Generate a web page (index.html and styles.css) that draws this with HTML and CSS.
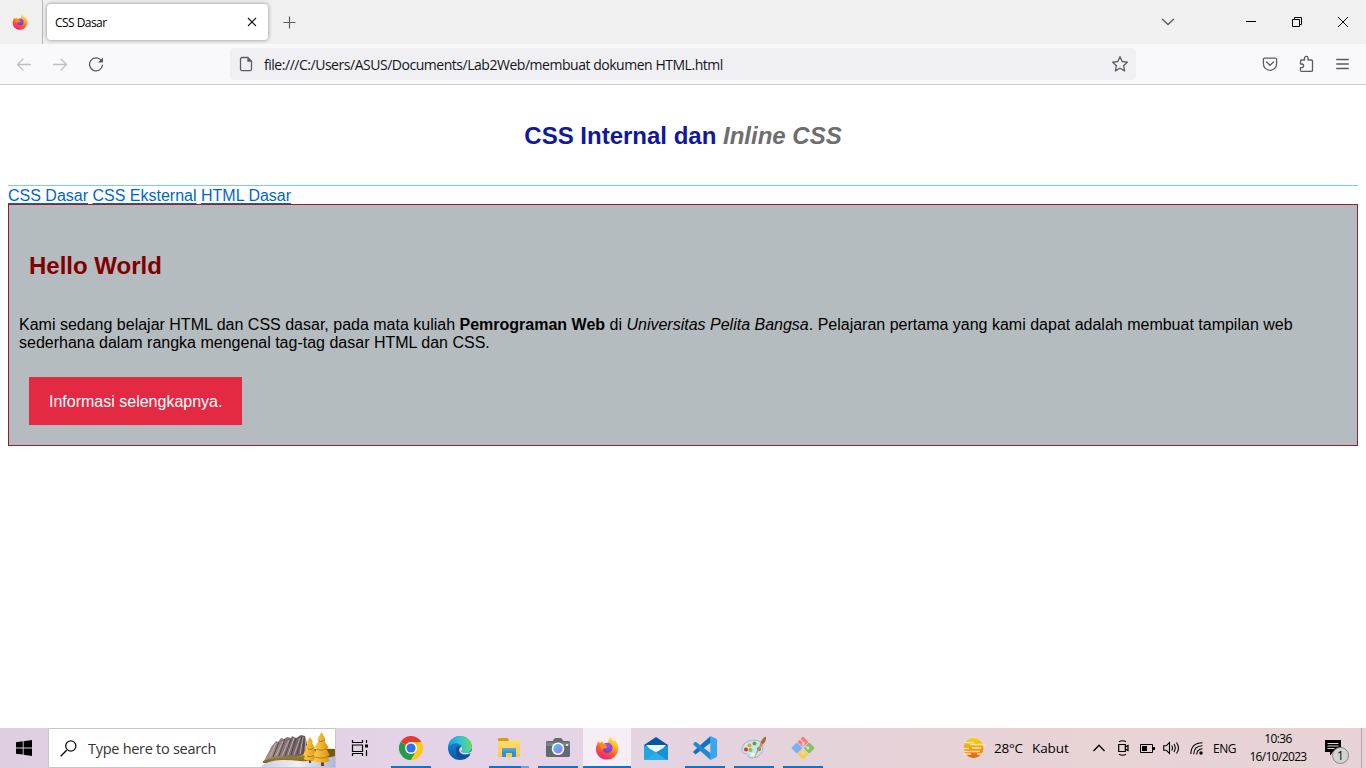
FILE: index.html
```html
<!DOCTYPE html>
<html lang="id">
<head>
<meta charset="utf-8">
<title>CSS Dasar</title>
<link rel="stylesheet" href="styles.css">
</head>
<body>
<svg class="defs" width="0" height="0" aria-hidden="true">
  <defs>
    <linearGradient id="ffBody" x1=".8" y1="0" x2=".3" y2="1"><stop offset="0" stop-color="#fff14a"/><stop offset=".35" stop-color="#ffb022"/><stop offset=".65" stop-color="#ff5a32"/><stop offset="1" stop-color="#f3187c"/></linearGradient>
    <radialGradient id="ffCore" cx=".6" cy=".3" r=".8"><stop offset="0" stop-color="#b04ae8"/><stop offset="1" stop-color="#5742c4"/></radialGradient>
    <linearGradient id="edgeTop" x1="0" y1=".4" x2="1" y2=".3"><stop offset="0" stop-color="#1d9be0"/><stop offset=".5" stop-color="#31c3d4"/><stop offset="1" stop-color="#6edb58"/></linearGradient>
    <linearGradient id="edgeLow" x1="0" y1="0" x2="0" y2="1"><stop offset="0" stop-color="#1a92dd"/><stop offset="1" stop-color="#0757ac"/></linearGradient>
    <linearGradient id="lens" x1="0" y1="0" x2="1" y2="1"><stop offset="0" stop-color="#42d3ef"/><stop offset=".5" stop-color="#759bf5"/><stop offset="1" stop-color="#cf5ce6"/></linearGradient>
    <linearGradient id="folder" x1="0" y1="0" x2="0" y2="1"><stop offset="0" stop-color="#ffdf79"/><stop offset="1" stop-color="#fbc941"/></linearGradient>
    <linearGradient id="sun" x1="0" y1="0" x2="0" y2="1"><stop offset="0" stop-color="#ffd000"/><stop offset=".5" stop-color="#f9a20c"/><stop offset="1" stop-color="#e8590c"/></linearGradient>
    <linearGradient id="rock" x1="0" y1="0" x2="1" y2="0"><stop offset="0" stop-color="#aa9490"/><stop offset="1" stop-color="#5b5158"/></linearGradient>
    <linearGradient id="snow" x1="0" y1="0" x2="1" y2="0"><stop offset="0" stop-color="#c8cbe6"/><stop offset=".5" stop-color="#f2f0f6"/><stop offset="1" stop-color="#aeb5d8"/></linearGradient>
    <linearGradient id="hill" x1="0" y1="0" x2="0" y2="1"><stop offset="0" stop-color="#c8ac32"/><stop offset="1" stop-color="#796018"/></linearGradient>
    <linearGradient id="tree" x1="0" y1="0" x2="1" y2="0"><stop offset="0" stop-color="#ffd04e"/><stop offset="1" stop-color="#d9950f"/></linearGradient>
    <symbol id="firefox" viewBox="0 0 24 24">
      <path d="M2.200 8.200 3 5.100l2 2.200c.7-1 1.500-1.600 2.500-2l.4 2.200 4.500.6 1.500-4.600L15.300.5c.6 2 2.300 3 3.100 5l1.700-1.400c2 3 3.500 6 3.200 9.200A11.300 11.300 0 0 1 12 23.600C5.600 23.600.9 18.700.9 13c0-1.800.5-3.400 1.300-4.800z" fill="url(#ffBody)"/>
      <path d="M8.200 9.200C9.700 6.400 13 6 15.300 7.600c2.200 1.600 2.800 4.600 1.500 7-1.500 2.600-5.500 3.200-7.800 1.200-1.300-1.200-1.600-2.400-1.400-3.400l3.400.2 1.500-1.800-4.300-1.600z" fill="url(#ffCore)"/>
      <path d="M6 7.600 12.200 8l-1.800 1.700 1.700 1.100-2 1.300-2.500.3 1.200 2C6 13.500 4.900 10.500 6 7.600z" fill="#ff8a20"/>
    </symbol>
  </defs>
</svg>

<div class="screen">
  <header class="tabbar">
    <div class="fxview"><svg width="16" height="16"><use href="#firefox"/></svg></div>
    <div class="tab"><span class="tab-title">CSS Dasar</span>
      <svg width="10" height="10" viewBox="0 0 10 10"><path d="M1 1l8 8M9 1 1 9" stroke="#15141a" stroke-width="1.1" fill="none"/></svg>
    </div>
    <svg class="newtab" width="13" height="13" viewBox="0 0 13 13"><path d="M6.500.5v12M.5 6.500h12" stroke="#5b5b66" stroke-width="1.2"/></svg>
    <div class="window-controls">
      <svg class="alltabs" width="14" height="8" viewBox="0 0 14 8"><path d="m1.200 1 5.800 5.500L12.800 1" stroke="#5b5b66" stroke-width="1.3" fill="none"/></svg>
      <svg width="46" height="44"><path d="M18 21.500h10" stroke="#000"/></svg>
      <svg width="46" height="44"><path d="M18.500 19.500h7v7h-7zM20.500 19v-1.500h7v7H26" stroke="#000" fill="none"/></svg>
      <svg width="46" height="44"><path d="m18 17 10 10M28 17 18 27" stroke="#000" fill="none"/></svg>
    </div>
  </header>

  <nav class="toolbar">
    <svg width="16" height="16" viewBox="0 0 16 16" class="nav-icon dim"><path d="M14.500 8.500H1.500M7 3 1.500 8.500 7 14"/></svg>
    <svg width="16" height="16" viewBox="0 0 16 16" class="nav-icon dim"><path d="M1.500 8.500h13M9 3l5.500 5.500L9 14"/></svg>
    <svg width="16" height="16" viewBox="0 0 16 16" class="nav-icon"><path d="M13.600 5A6.500 6.500 0 1 0 14.500 9.200"/><path d="M15 1.500v5h-5z" class="solid"/></svg>
    <div class="urlbar">
      <svg width="14" height="16" viewBox="0 0 14 16" class="nav-icon"><path d="M3 1.500h6l3.500 3.600v8a1.500 1.500 0 0 1-1.500 1.500H3a1.500 1.500 0 0 1-1.500-1.500V3A1.500 1.500 0 0 1 3 1.500z"/><path class="solid" d="M8.300 1.300v4.400h4.500z"/></svg>
      <span class="url">file:///C:/Users/ASUS/Documents/Lab2Web/membuat dokumen HTML.html</span>
      <svg width="18" height="18" viewBox="0 0 18 18" class="nav-icon star"><path d="m9 1.700 2.200 4.800 5.300.6-3.900 3.600 1 5.200L9 13.300l-4.600 2.600 1-5.200-3.900-3.600 5.300-.6z"/></svg>
    </div>
    <div class="tools">
      <svg width="16" height="16" viewBox="0 0 16 16" class="nav-icon"><path d="M2.700 2.200h10.600c.8 0 1.300.5 1.300 1.300v4.200a6.600 6.600 0 0 1-13.200 0V3.500c0-.8.5-1.300 1.300-1.300zM4.500 6 8 9.200 11.500 6"/></svg>
      <svg width="16" height="18" viewBox="0 0 16 18" class="nav-icon"><path d="M1.500 8V6.200c0-.8.4-1.200 1.200-1.200H5.500V3.200a1.800 1.800 0 0 1 3.600 0V5h3.200c.8 0 1.200.4 1.200 1.200v9c0 .8-.4 1.200-1.200 1.200H2.700c-.8 0-1.200-.4-1.200-1.200v-2.500h1.700a1.900 1.900 0 0 0 0-3.700H1.500z"/></svg>
      <svg width="14" height="12" viewBox="0 0 14 12" class="nav-icon"><path d="M.7 1.500h11.600M.7 6h11.600M.7 10.500h11.600"/></svg>
    </div>
  </nav>

  <main class="page">
    <div class="page-header"><h1>CSS Internal dan <i>Inline CSS</i></h1></div>
    <nav class="links"><a>CSS Dasar</a> <a>CSS Eksternal</a> <a>HTML Dasar</a></nav>
    <section class="intro">
      <h1>Hello World</h1>
      <p>Kami sedang belajar HTML dan CSS dasar, pada mata kuliah <b>Pemrograman Web</b> di <i>Universitas Pelita Bangsa</i>. Pelajaran pertama yang kami dapat adalah membuat tampilan web sederhana dalam rangka mengenal tag-tag dasar HTML dan CSS.</p>
      <a class="button">Informasi selengkapnya.</a>
    </section>
  </main>

  <footer class="taskbar">
    <div class="start"><svg width="16" height="16" viewBox="0 0 16 16"><path d="M0 2.300 6.700 1.300v6.200H0zM7.600 1.200 16 0v7.500H7.600zM0 8.400h6.700v6.200L0 13.700zM7.600 8.400H16V16l-8.400-1.200z"/></svg></div>
    <div class="search">
      <svg width="17" height="17" viewBox="0 0 17 17"><path d="M.7 16.300 6.700 10.300" stroke="#111" stroke-width="1.400"/><circle cx="10.800" cy="6" r="5.100" fill="none" stroke="#111" stroke-width="1.300"/></svg>
      <span class="search-text">Type here to search</span>
      <svg class="scene" width="74" height="38" viewBox="0 0 74 38">
        <path d="M3 32c2-5 4-7 7-14l5-6 2 1 3-4 3 1 3-2 4 1 1-2 4 2 5-3 4 1 2 8 3 3v14z" fill="url(#rock)"/>
        <path d="m9 28 6-14M15 27l7-15M21 27l7-16M27 26l6-17M33 26l6-17M39 25l3-17M44 24l1-15" stroke="#d2bbae" stroke-width=".8"/>
        <path d="m12 28 6-15M18 27l6-17M24 27l6-17M30 26l5-17M36 25l5-17M42 25l1-15" stroke="#50464f" stroke-width="1"/>
        <path d="M2 32c14-6 25-2 39-6 12-3 22-6 33-6v14H2z" fill="url(#hill)"/>
        <path d="M44 22c10-3 20-2 30-2v8c-12 0-18 3-30 2z" fill="#765811"/>
        <path d="M0 38c6-8 23-8 39-6 10 1 22-2 35-5v11z" fill="url(#snow)"/>
        <path d="M48 29h2v5h-2zM60 31h3v6h-3z" fill="#704218"/>
        <path d="m49 8 3 5-1 1 3 5-1 1 3 6-2 1 1 3c-3 2-9 2-12 0l1-3-2-1 3-6-1-1 3-5-1-1z" fill="url(#tree)"/>
        <path d="m60.500 3 4 7-1 2 4 6-2 2 3 6-2 2 2 4c-4 2-12 2-16 0l2-4-2-2 3-6-2-2 4-6-1-2z" fill="url(#tree)"/>
        <path d="M58 12c2 1 4 0 6-1M56 20c4 2 7 1 10-1M55 28c4 2 9 1 12-1M47 20c3 1 4 0 5-1M46 27c3 1 6 1 7-1" stroke="#b5760e" fill="none"/>
      </svg>
    </div>
    <div class="apps">
      <div class="app"><svg width="18" height="16" viewBox="0 0 18 16"><path d="M1.500 0v2.500h10V0M1.500 16v-2.500h10V16M1.500 5h10v6.500h-10zM15.500 0v3M15.500 10v6" fill="none" stroke="#000" stroke-width="1.200"/><path d="M14 4.500h3v3h-3z"/></svg></div>
      <div class="app open chrome"><svg width="24" height="24" viewBox="0 0 24 24"><path d="M12 12 1.600 6A12 12 0 0 1 22.400 6H12z" fill="#e33b2e"/><path d="M12 12 1.600 6A12 12 0 0 0 12 24l5.200-9z" fill="#249a4b"/><path d="M12 6h10.400A12 12 0 0 1 12 24l5.200-9z" fill="#fdc819"/><circle cx="12" cy="12" r="6" fill="#fff"/><circle cx="12" cy="12" r="4.600" fill="#2e73e8"/></svg></div>
      <div class="app"><svg width="24" height="24" viewBox="0 0 24 24"><circle cx="12" cy="12" r="12" fill="url(#edgeLow)"/><path d="M0 11.500C1 4.500 6 0 12 0c7 0 12 5 12 10.500 0 4-3 6.500-7 6.500-2.500 0-3.800-.8-3.800-1.700 0-.8 1-1.300 1-3.100 0-2.500-2.600-5-6.400-5C4.700 7.200 1.500 8.900 0 11.500z" fill="url(#edgeTop)"/><path d="M9.200 11c-4 5 .5 13.500 8 11.500 2.400-.8 4-2.300 5.100-4-4.300 2.300-11 1-11.100-4 0-1.600 1-2.700 1.800-3.300-1-1.200-2.900-1.300-3.800-.2z" fill="#134e8f"/><path d="M13.700 10.400c-4.500 1.900-2.800 8 4 7.900 2.200 0 4-.7 5-1.300l-.7 1.700 1.700-.6.300-3.200c-1.700 1.300-4.200 2.100-6.400 2-2.500 0-4.400-.7-4.400-1.600 0-.8 1-1.300 1-3.100 0-.7-.2-1.300-.5-1.800z" fill="#e6d5e7"/></svg></div>
      <div class="app open multi"><svg width="22" height="20" viewBox="0 0 22 20"><path d="M0 2V1.300C0 .6.500 0 1.300 0h8.200l1.500 2h9.700c.7 0 1.300.5 1.300 1.300V18c0 .6-.4 1-1 1H1c-.6 0-1-.4-1-1z" fill="url(#folder)"/><path d="M0 3V1.300C0 .6.500 0 1.300 0h8.400l1.300 1.700L9.800 3z" fill="#d99a14"/><path d="M4 19v-8.500h14V19h-4v-4H8v4z" fill="#2f8fdb"/><path d="M4 10.500h14v3H4z" fill="#43a1e7"/></svg></div>
      <div class="app open"><svg width="24" height="20" viewBox="0 0 24 20"><path d="M0 4.500C0 3.600.5 3 1.400 3h5.300L8.200.7C8.500.2 9 0 9.500 0h5c.5 0 1 .2 1.300.7L17.300 3h5.300c.9 0 1.400.6 1.400 1.500v13c0 .9-.6 1.500-1.400 1.500H1.400C.6 19 0 18.400 0 17.500z" fill="#626a70"/><path d="M0 4.500h24V8H0z" fill="#7c858b"/><circle cx="12" cy="10.700" r="6.300" fill="#f8f8fa"/><circle cx="12" cy="10.700" r="4.700" fill="url(#lens)"/><path d="M20 6h2v2h-2z" fill="#c9eaf0"/></svg></div>
      <div class="app active"><svg width="24" height="24"><use href="#firefox"/></svg></div>
      <div class="app"><svg width="24" height="23" viewBox="0 0 24 23"><path d="M0 8 12 0l12 8v5H0z" fill="#0756a0"/><path d="M2 8h20l-5 6H7z" fill="#edf8fd"/><path d="M0 8l12 7.500V23H1c-.6 0-1-.4-1-1z" fill="#22a5e1"/><path d="m24 8-12 7.500L1 23h22c.6 0 1-.4 1-1z" fill="#1591d5"/><path d="m1 23 11-7.500L23 23z" fill="#2eaee8"/></svg></div>
      <div class="app open"><svg width="24" height="24" viewBox="0 0 24 24"><path d="M17.500 0 .5 15.300c-.5.400-.5.900 0 1.300l1.400 1.300c.4.300.8.300 1.200 0L18 6.500z" fill="#1175bd"/><path d="M17.500 24 .5 8.700c-.5-.4-.5-.9 0-1.300l1.400-1.300c.4-.3.800-.3 1.200 0L18 17.500z" fill="#2089d1"/><path d="m17.300 0 6.100 2.700c.4.200.6.500.6 1v16.600c0 .5-.2.800-.6 1L17.300 24z" fill="#35a8f0"/></svg></div>
      <div class="app open"><svg width="26" height="24" viewBox="0 0 26 24"><path d="M1 15C0 8 7 3.800 14 4.200c6 .3 8.500 4 7.700 9-.9 6-6.500 9-11.700 8.800-3.500-.2-1.700-3.200-4-4.200C4 17 1.600 18 1 15z" fill="#cbe3ed" stroke="#91a9b6" stroke-width=".8"/><circle cx="5" cy="13.500" r="2" fill="#d9372b"/><circle cx="8.500" cy="9.500" r="2" fill="#dfa236"/><circle cx="13.500" cy="7.500" r="2" fill="#54a83c"/><circle cx="9.500" cy="14" r="2" fill="#88bf4b"/><circle cx="18" cy="13" r="2" fill="#3979c5"/><circle cx="12" cy="18.500" r="1.800" fill="#fff"/><path d="m12.500 23 7-16 2.500 1.200z" fill="#dc9136"/><path d="M19.500 7c.8-3 3-5.500 5.500-6.500.3 3-.8 5.700-3 7.700z" fill="#9b6b45"/></svg></div>
      <div class="app open"><svg width="24" height="24" viewBox="0 0 24 24"><g transform="rotate(45 12 12)"><rect x="3.700" y="3.700" width="7.900" height="7.900" rx="1" fill="#f57d80"/><rect x="12.400" y="3.700" width="7.900" height="7.900" rx="1" fill="#86bf62"/><rect x="3.700" y="12.400" width="7.900" height="7.900" rx="1" fill="#7aaef2"/><rect x="12.400" y="12.400" width="7.900" height="7.900" rx="1" fill="#f6cf4f"/></g><path d="M9 3l3.500 4M12 8v9M14 10l3 2" stroke="#e5d5dc" stroke-width="1.200"/><circle cx="12.500" cy="7.500" r="1.500" fill="#e5d5dc"/><circle cx="12" cy="17" r="1.500" fill="#e5d5dc"/><circle cx="17" cy="12" r="1.500" fill="#e5d5dc"/></svg></div>
    </div>
    <div class="tray">
      <svg class="weather" width="24" height="20" viewBox="0 0 24 20"><circle cx="12.500" cy="10" r="10" fill="url(#sun)"/><path d="M4 4.500h9M9 6.500h15M0 10.500h8M11 10h9M3 13.500h16M2 16h8M16 16h6" stroke="#ffe4ba" stroke-width="1.300"/></svg>
      <span class="temp">28°C</span><span class="cond">Kabut</span>
      <svg class="t-up" width="12" height="8" viewBox="0 0 12 8"><path d="m.5 7 5.500-5.700L11.500 7" fill="none" stroke="#000" stroke-width="1.300"/></svg>
      <svg class="t-meet" width="12" height="16" viewBox="0 0 12 16"><path d="M1.700 4.500h6.600v7H1.700zM8.300 7l2.700-1.500v5L8.300 9M2 1.800Q5.500-.3 9 1.800M2 14.200q3.500 2.100 7 0" fill="none" stroke="#000" stroke-width="1.200"/></svg>
      <svg class="t-bat" width="15" height="9" viewBox="0 0 15 9"><path d="M.5.500h12v8H.5zM13.500 3v3" fill="none" stroke="#000"/><path d="M2 2h5v5H2zM13 3h2v3h-2z"/></svg>
      <svg class="t-vol" width="17" height="14" viewBox="0 0 17 14"><path d="M.7 4.800h2.500L6.500 1.500v11L3.200 9.200H.7zM8.700 4.500Q10.300 7 8.700 9.500M11 3q2.500 4 0 8M13.500 1.500q4 5.500 0 11" fill="none" stroke="#000" stroke-width="1.100"/></svg>
      <svg class="t-wifi" width="13" height="13" viewBox="0 0 13 13"><path d="M.8 12Q1 1 12.500.8M3.700 12.300Q4 4 12.500 3.800M6.700 12.500q.3-5.500 5.800-5.700" fill="none" stroke="#000" stroke-width="1.100"/><circle cx="11" cy="11" r="1.700"/></svg>
      <span class="lang">ENG</span>
      <div class="clock"><span class="time">10:36</span><span class="date">16/10/2023</span></div>
      <div class="notice"><svg width="16" height="16" viewBox="0 0 16 16"><path d="M0 0h16v12H8l-3 3.500V12H0z"/><path d="M2.500 3.500h11M2.500 6h11M2.500 8.500h7" stroke="#e7d3d7"/></svg><span class="badge">1</span></div>
      <div class="desktop-edge"></div>
    </div>
  </footer>
</div>
</body>
</html>
```
FILE: styles.css
```css
* { box-sizing: border-box; }
body { margin: 0; background: #fff; overflow: hidden; }
svg { display: block; flex: none; }
.defs { position: absolute; }
.screen { width: 1366px; height: 768px; display: flex; flex-direction: column; font-family: "Open Sans", "Noto Sans", sans-serif; color: #000; }
.tabbar { height: 44px; background: #f0f0f0; display: flex; align-items: center; flex: none; }
.fxview { width: 43px; height: 44px; border-right: 1px solid #b5b5b8; display: flex; align-items: center; padding-left: 12px; }
.tab { width: 221px; height: 36px; margin: 0 0 1px 4px; background: #fff; border-radius: 4px; box-shadow: 0 0 4px rgba(0,0,0,.42); display: flex; align-items: center; justify-content: space-between; padding: 1px 11px 0 8px; }
.tab-title { font-size: 12px; letter-spacing: -.55px; white-space: nowrap; }
.newtab { margin-left: 15px; }
.window-controls { margin-left: auto; display: flex; align-items: center; }
.alltabs { margin-right: 53px; }
.toolbar { height: 41px; background: #f9f9fb; border-bottom: 1px solid #ccc; display: flex; align-items: center; gap: 20px; padding-left: 16px; flex: none; }
.nav-icon { fill: none; stroke: #5b5b66; stroke-width: 1.3; stroke-linejoin: round; stroke-linecap: round; }
.nav-icon .solid { fill: #5b5b66; stroke: none; }
.dim { stroke: #bebec3; }
.urlbar { width: 906px; height: 32px; margin-left: 106px; background: #f0f0f4; border-radius: 4px; display: flex; align-items: center; padding: 0 7px 0 9px; }
.url { margin-left: 11px; padding-top: 1px; font-size: 14px; letter-spacing: -.47px; color: #15141a; white-space: nowrap; }
.star { margin-left: auto; }
.tools { display: flex; align-items: center; gap: 21px; margin-left: 106px; }
.page { flex: 1; padding: 0 8px; font: 16px/18px "Liberation Sans", Arial, sans-serif; }
.page-header { height: 101px; border-bottom: 1px solid #77ccef; padding-top: 37px; text-align: center; }
h1 { margin: 0; font-size: 24px; line-height: 28px; }
.page-header h1 { color: #0f189f; }
.page-header i { color: #6f6d6d; }
.links { height: 18px; line-height: 19px; }
.links a { color: #0066cc; text-decoration: underline; text-underline-offset: 2px; text-decoration-thickness: 1px; text-decoration-skip-ink: none; }
.intro { height: 242px; background: #b5bcbf; border: 1px solid #991b2e; padding: 47px 10px 0; }
.intro h1 { color: #800000; margin-left: 10px; }
.intro p { margin: 36px 0 25px; }
.button { display: inline-block; margin-left: 10px; padding: 16px 20px 14px; background: #e42a42; color: #fff; }
.taskbar { height: 40px; flex: none; display: flex; background: linear-gradient(90deg, #dfcde2, #e5d4e8 35%, #e4d3da 60%, #e8d3d5 80%, #e7d3d7); }
.start { width: 48px; display: flex; align-items: center; justify-content: center; }
.search { width: 288px; border: 1px solid #c6c6c6; background: #fff; display: flex; align-items: center; padding-left: 11px; }
.search-text { margin-left: 11px; font-size: 14.5px; letter-spacing: -.28px; color: #333; white-space: nowrap; }
.scene { margin-left: auto; }
.apps { display: flex; gap: 1px; }
.app { width: 48px; position: relative; display: flex; align-items: center; justify-content: center; }
.chrome { margin-left: 2px; }
.app.open::after, .app.active::after { content: ""; position: absolute; bottom: 0; left: 4px; width: 40px; height: 2px; background: #0078d7; }
.app.multi::after { background: linear-gradient(90deg, #0078d7 32px, #61a6df 32px); }
.app.active { background: #f6edf6; }
.app.active::after { left: 0; width: 48px; }
.tray { margin-left: auto; display: flex; align-items: center; height: 40px; font-size: 13.5px; white-space: nowrap; }
.weather { margin-right: 9px; }
.temp { width: 38px; letter-spacing: -.2px; }
.cond { width: 61px; letter-spacing: -.1px; }
.t-meet { margin-left: 12px; }
.t-bat { margin-left: 11px; }
.t-vol { margin-left: 8px; }
.t-wifi { margin-left: 10px; }
.lang { width: 30px; margin-left: 10px; font-size: 12px; letter-spacing: -.5px; }
.clock { width: 70px; display: flex; flex-direction: column; align-items: center; font-size: 12px; line-height: 18px; letter-spacing: -.65px; margin-bottom: 1px; }
.notice { position: relative; width: 36px; margin-left: 12px; }
.badge { position: absolute; left: 7px; top: 7px; width: 17px; height: 17px; border: 1px solid #858585; border-radius: 50%; background: #d3d3d3; font-size: 12px; line-height: 15px; text-align: center; }
.desktop-edge { width: 5px; height: 40px; border-left: 1px solid #b8a6aa; }
```
